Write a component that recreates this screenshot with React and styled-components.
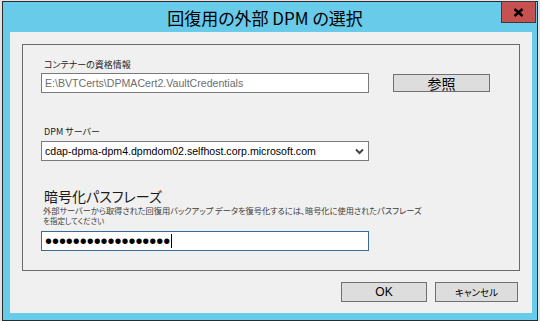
import React from 'react'
import styled, { createGlobalStyle } from 'styled-components'

const jp = `"Noto Sans CJK JP", "Liberation Sans", sans-serif`
const latin = `"Liberation Sans", "Noto Sans CJK JP", sans-serif`
const frame = '#68cbe9'
const client = '#f0f0f0'

const GlobalStyle = createGlobalStyle`
  html, body {
    margin: 0;
    background: #e4e4e4;
  }
  body {
    font-family: ${jp};
  }
`

const Window = styled.div`
  position: relative;
  box-sizing: border-box;
  width: 536px;
  height: 320px;
  margin: 1px 0 0 2px;
  border: 1px solid #2b2b2b;
  background: ${frame};
  padding: 0 5px 7px 7px;
  display: flex;
  flex-direction: column;
`

const TitleBar = styled.div`
  height: 30px;
  display: flex;
  align-items: center;
  justify-content: center;
  padding-right: 12px;
  font-family: ${jp};
  font-size: 17px;
  color: #000;
  font-feature-settings: "palt";
`

const CloseButton = styled.div`
  position: absolute;
  top: -1px;
  right: 1px;
  box-sizing: border-box;
  width: 35px;
  height: 22px;
  background: #c75050;
  border: 1px solid #3a3a3a;
  display: flex;
  align-items: center;
  justify-content: center;
`

const Client = styled.div`
  flex: 1;
  background: ${client};
  padding: 12px 12px 0 12px;
  display: flex;
  flex-direction: column;
`

const GroupBox = styled.div`
  box-sizing: border-box;
  height: 227px;
  border: 1px solid #6b6b6b;
  padding: 0 0 0 18px;
  display: flex;
  flex-direction: column;
`

const SmallLabel = styled.div`
  font-family: ${jp};
  font-size: 9px;
  line-height: 12px;
  height: 12px;
  color: #222;
  font-feature-settings: "palt";
  margin-top: ${p => p.$top}px;
  margin-left: 3px;
`

const BigLabel = styled.div`
  font-family: ${jp};
  font-size: 14px;
  line-height: 15px;
  height: 15px;
  color: #1a1a1a;
  font-feature-settings: "palt";
  margin-top: ${p => p.$top}px;
  margin-left: 3px;
`

const Hint = styled.div`
  font-family: ${jp};
  font-size: ${p => p.$size}px;
  line-height: ${p => p.$line}px;
  height: ${p => p.$line}px;
  color: #3c3c3c;
  font-feature-settings: "palt";
  margin-top: ${p => p.$top || 0}px;
  margin-left: 2px;
  white-space: nowrap;
`

const Row = styled.div`
  display: flex;
  align-items: center;
  margin-top: ${p => p.$top}px;
`

const Field = styled.div`
  box-sizing: border-box;
  width: 328px;
  height: ${p => p.$h || 20}px;
  background: #fff;
  border: 1px solid ${p => (p.$focus ? '#3a6a98' : '#7a7a7a')};
  display: flex;
  align-items: center;
  padding: 0 4px 0 3px;
  font-family: ${latin};
  font-size: 10.6px;
  color: ${p => (p.$muted ? '#6d6d6d' : '#000')};
  white-space: nowrap;
  overflow: hidden;
`

const FieldText = styled.span`
  flex: 1;
  overflow: hidden;
`

const Dots = styled.span`
  font-family: ${latin};
  font-size: 20px;
  line-height: 18px;
  letter-spacing: -0.05px;
  color: #000;
`

const Caret = styled.span`
  display: inline-block;
  width: 1px;
  height: 14px;
  background: #000;
  margin-left: 1px;
`

const PushButton = styled.div`
  box-sizing: border-box;
  width: ${p => p.$w}px;
  height: ${p => p.$h || 20}px;
  margin-left: ${p => p.$gap || 0}px;
  background: #dddddd;
  border: 1px solid #707070;
  display: flex;
  align-items: center;
  justify-content: center;
  font-family: ${p => (p.$latin ? latin : jp)};
  font-size: ${p => p.$size}px;
  color: #000;
  font-feature-settings: "palt";
`

const ButtonRow = styled.div`
  display: flex;
  justify-content: flex-end;
  margin: 11px 2px 0 0;
`

const Chevron = () => (
  <svg width="9" height="7" viewBox="0 0 9 7">
    <path d="M1 1.5 L4.5 5 L8 1.5" fill="none" stroke="#444" strokeWidth="2" />
  </svg>
)

const CloseGlyph = () => (
  <svg width="11" height="9" viewBox="0 0 11 9">
    <path d="M1.5 1 L9.5 8 M9.5 1 L1.5 8" stroke="#000" strokeWidth="2.4" />
  </svg>
)

const App = () => (
  <>
    <GlobalStyle />
    <Window>
      <TitleBar>回復用の外部 DPM の選択</TitleBar>
      <CloseButton>
        <CloseGlyph />
      </CloseButton>
      <Client>
        <GroupBox>
          <SmallLabel $top={14}>コンテナーの資格情報</SmallLabel>
          <Row $top={2}>
            <Field $muted>
              <FieldText>E:\BVTCerts\DPMACert2.VaultCredentials</FieldText>
            </Field>
            <PushButton $w={97} $h={18} $gap={24} $size={14}>参照</PushButton>
          </Row>
          <SmallLabel $top={33}>DPM サーバー</SmallLabel>
          <Row $top={3}>
            <Field>
              <FieldText>cdap-dpma-dpm4.dpmdom02.selfhost.corp.microsoft.com</FieldText>
              <Chevron />
            </Field>
          </Row>
          <BigLabel $top={28}>暗号化パスフレーズ</BigLabel>
          <Hint $size={8.2} $line={10} $top={1}>
            外部サーバーから取得された回復用バックアップ データを復号化するには、暗号化に使用されたパスフレーズ
          </Hint>
          <Hint $size={7.5} $line={10} $top={1}>を指定してください</Hint>
          <Row $top={5}>
            <Field $focus $h={20}>
              <Dots>••••••••••••••••••</Dots>
              <Caret />
            </Field>
          </Row>
        </GroupBox>
        <ButtonRow>
          <PushButton $w={86} $size={12} $latin>OK</PushButton>
          <PushButton $w={83} $gap={8} $size={9.5}>キャンセル</PushButton>
        </ButtonRow>
      </Client>
    </Window>
  </>
)

export default App
